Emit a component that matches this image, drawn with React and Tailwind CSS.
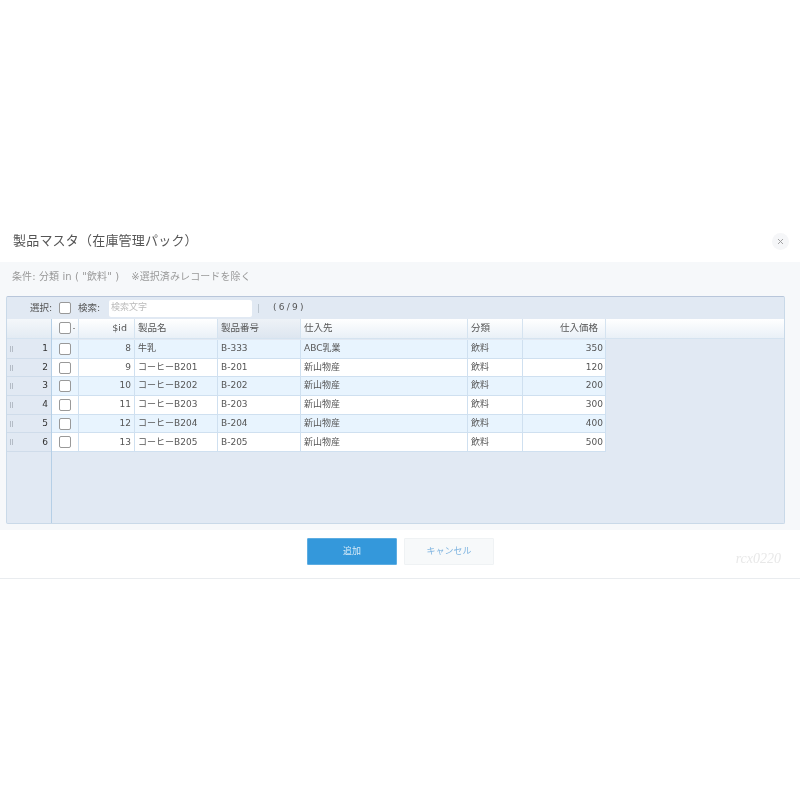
const rows = [
  [1, 8, '牛乳', 'B-333', 'ABC乳業', '飲料', 350],
  [2, 9, 'コーヒーB201', 'B-201', '新山物産', '飲料', 120],
  [3, 10, 'コーヒーB202', 'B-202', '新山物産', '飲料', 200],
  [4, 11, 'コーヒーB203', 'B-203', '新山物産', '飲料', 300],
  [5, 12, 'コーヒーB204', 'B-204', '新山物産', '飲料', 400],
  [6, 13, 'コーヒーB205', 'B-205', '新山物産', '飲料', 500],
];

const font = { fontFamily: '"DejaVu Sans", "Noto Sans CJK JP", sans-serif' };

function Check({ className = '' }) {
  return <span className={`block w-3 h-3 shrink-0 rounded-[2px] border border-[#999] bg-white ${className}`} />;
}

const colGrid = 'grid grid-cols-[27px_56px_83px_83px_167px_55px_83px]';

function HeadCell({ children, right, active }) {
  return (
    <div className={`h-full flex items-center border-r border-[#d5e3f0] text-[9.5px] text-[#555] whitespace-nowrap ${right ? 'justify-end pr-[7px]' : 'pl-[3px]'} ${active ? 'bg-gradient-to-b from-[#eef2f7] to-[#dde6f0]' : ''}`}>
      {children}
    </div>
  );
}

function Cell({ children, right, tight }) {
  return (
    <div className={`h-full flex items-center border-r border-[#cfe0f0] text-[9px] text-[#555] whitespace-nowrap ${right ? (tight ? 'justify-end pr-[2px]' : 'justify-end pr-[3px]') : 'pl-[3px]'}`}>
      {children}
    </div>
  );
}

function Grip() {
  return (
    <span className="flex gap-[1px]">
      <span className="w-px h-[6px] bg-[#b4bcc6]" />
      <span className="w-px h-[6px] bg-[#b4bcc6]" />
    </span>
  );
}

export default function App() {
  return (
    <div className="w-[800px] h-[800px] bg-white pt-[220px] blur-[0.3px]" style={font}>
      <div className="h-[359px] flex flex-col border-b border-[#e9ecef]">
        <div className="h-[42px] flex items-center justify-between pl-[13px] pr-[11px]">
          <span className="text-[13px] text-[#555] tracking-[0.2px]">製品マスタ（在庫管理パック）</span>
          <span className="w-[17px] h-[17px] rounded-full bg-[#f5f6f8] flex items-center justify-center">
            <svg width="7" height="7" viewBox="0 0 7 7"><path d="M1 1l5 5M6 1L1 6" stroke="#999" strokeWidth="0.9" /></svg>
          </span>
        </div>
        <div className="h-[268px] bg-[#f6f8fa] flex flex-col">
          <div className="h-[34px] flex items-start pt-[7px] pl-3 text-[10px] text-[#999] gap-[12px] tracking-[0.1px]">
            <span>条件: 分類 in ( "飲料" )</span>
            <span>※選択済みレコードを除く</span>
          </div>
          <div className="ml-[6px] mr-[15px] h-[228px] bg-[#e1e9f3] border border-[#c9d9e8] border-t-[#b8c6da] rounded-[2px] flex flex-col overflow-hidden">
            <div className="h-[22px] shrink-0 flex items-center text-[9.5px] text-[#555] whitespace-nowrap">
              <span className="ml-[23px] w-[22px]">選択:</span>
              <Check className="ml-[7px]" />
              <span className="ml-[7px] w-[22px]">検索:</span>
              <span className="ml-[9px] w-[143px] h-[17px] bg-white rounded-[2px] flex items-center pl-[2px] text-[9px] text-[#bbb]">検索文字</span>
              <span className="ml-[6px] w-px h-[9px] bg-[#bcc6d0]" />
              <span className="ml-[14px] text-[9px] tracking-[-0.3px]">( 6 / 9 )</span>
            </div>
            <div className="flex-1 flex min-h-0">
              <div className="w-[45px] shrink-0 flex flex-col border-r border-[#b5cfe6]">
                <div className="h-[20px] mb-px bg-gradient-to-b from-[#f4f7fa] to-[#e3ebf3] border-b border-[#d5e3f0]" />
                {rows.map((r) => (
                  <div key={r[0]} className="h-[18.7px] flex items-center justify-between pl-[3px] pr-[3px] border-b border-[#cfdcea] text-[9px] text-[#333]">
                    <Grip />
                    <span>{r[0]}</span>
                  </div>
                ))}
              </div>
              <div className="flex-1 min-w-0 flex flex-col">
                <div className="h-[20px] mb-px flex bg-gradient-to-b from-white to-[#e9f0f7] border-b border-[#d5e3f0]">
                  <div className={colGrid}>
                    <HeadCell><Check className="ml-[4px] -mt-px" /><span className="ml-[2px] w-[2px] h-px bg-[#999]" /></HeadCell>
                    <HeadCell right>$id</HeadCell>
                    <HeadCell>製品名</HeadCell>
                    <HeadCell active>製品番号</HeadCell>
                    <HeadCell>仕入先</HeadCell>
                    <HeadCell>分類</HeadCell>
                    <HeadCell right>仕入価格</HeadCell>
                  </div>
                </div>
                <div className="w-[554px]">
                  {rows.map((r, i) => (
                    <div key={r[0]} className={`${colGrid} h-[18.7px] border-b border-[#cfe0f0] ${i % 2 === 0 ? 'bg-[#e8f4fe]' : 'bg-white'}`}>
                      <Cell><Check className="ml-[4px]" /></Cell>
                      <Cell right>{r[1]}</Cell>
                      <Cell>{r[2]}</Cell>
                      <Cell>{r[3]}</Cell>
                      <Cell>{r[4]}</Cell>
                      <Cell>{r[5]}</Cell>
                      <Cell right tight>{r[6]}</Cell>
                    </div>
                  ))}
                </div>
              </div>
            </div>
          </div>
        </div>
        <div className="flex-1 relative flex items-start justify-center gap-[7px] pt-[8px] pl-[1px]">
          <button className="w-[90px] h-[27px] bg-[#3498db] border border-[#5dade2] rounded-[1px] text-[9px] text-white/80">追加</button>
          <button className="w-[90px] h-[27px] bg-[#f7f9fa] border border-[#eff2f4] rounded-[1px] text-[9px] text-[#7fb4e0]">キャンセル</button>
          <span className="absolute right-[19px] top-[18px] text-[14px] italic text-[#e8e8e8]" style={{ fontFamily: '"Liberation Serif", serif' }}>rcx0220</span>
        </div>
      </div>
    </div>
  );
}
